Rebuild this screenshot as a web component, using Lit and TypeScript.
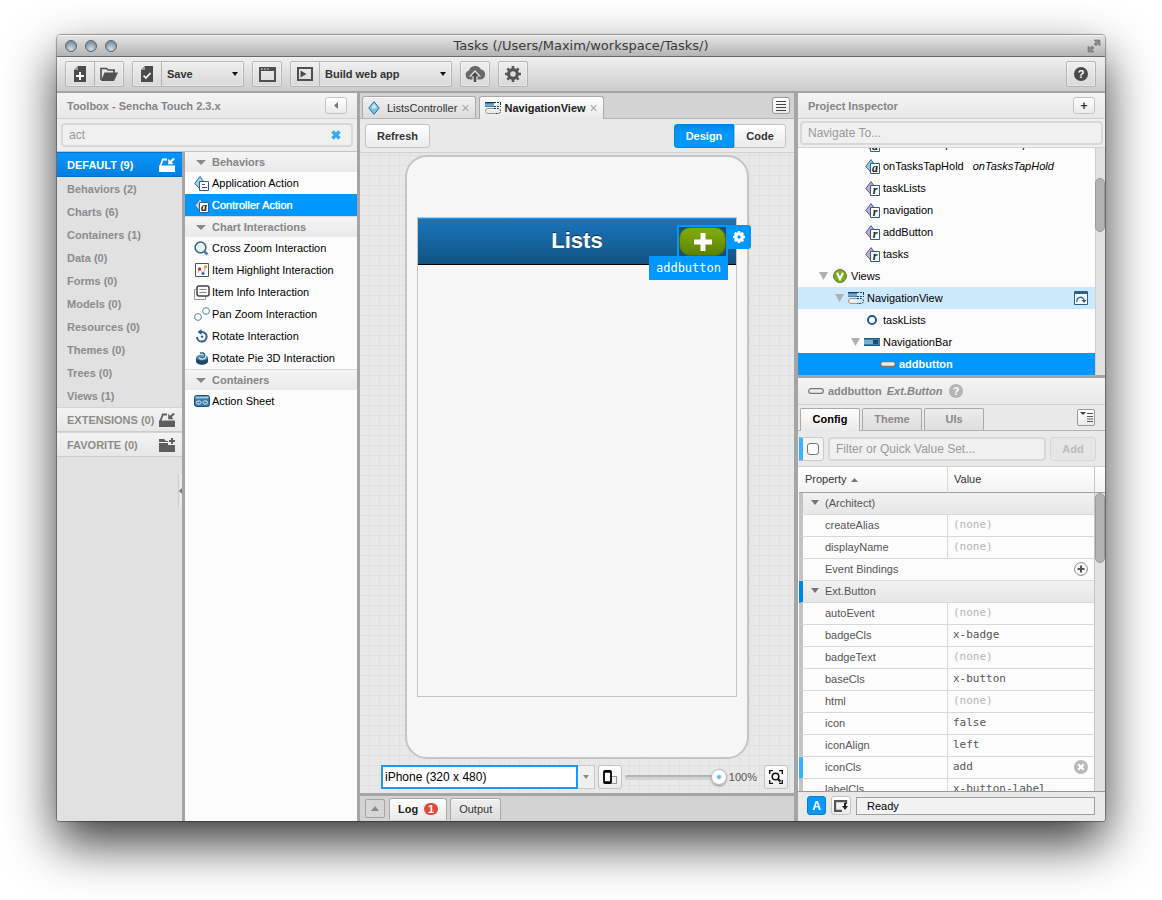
import { LitElement, html, css, svg, nothing, TemplateResult } from "lit";
import { customElement, state } from "lit/decorators.js";
import { classMap } from "lit/directives/class-map.js";

const icon = (w: number, h: number, body: TemplateResult) =>
  html`<svg width=${w} height=${h} viewBox="0 0 ${w} ${h}" aria-hidden="true">${body}</svg>`;

const caret = icon(6, 4, svg`<path d="M0 0h6L3 4z" fill="#111"/>`);
const triangle = (fill: string, w = 10, h = 6) =>
  html`<svg width=${w} height=${h} viewBox="0 0 10 6" preserveAspectRatio="none" aria-hidden="true"><path d="M0 0h10L5 6z" fill=${fill} /></svg>`;

const sheetPath = "M4 0h8v16H0V4z";

const I = {
  newFile: icon(12, 16, svg`<path d=${sheetPath} fill="#4b4b4b"/><path d="M0 4h4V0" fill="#9a9a9a"/><path d="M5 6h2v3h3v2H7v3H5v-3H2V9h3z" fill="#f4f4f4"/>`),
  check: icon(12, 16, svg`<path d=${sheetPath} fill="#4b4b4b"/><path d="M0 4h4V0" fill="#9a9a9a"/><path d="M2.6 9.6l2.3 2.4 4.6-5" stroke="#f4f4f4" stroke-width="1.8" fill="none"/>`),
  folder: icon(18, 14, svg`<path d="M1 13V1.5h5.5L8 3h6v3" fill="none" stroke="#4b4b4b" stroke-width="1.6"/><path d="M4.5 5.500H18l-4 8.500H1z" fill="#505050"/>`),
  win: icon(17, 15, svg`<path d="M1 1h15v13H1z" fill="none" stroke="#4f4f4f" stroke-width="2"/><path d="M1 2.500h15" stroke="#4f4f4f" stroke-width="3"/><path d="M2 2h1.500M5 2h1.500M8 2h1.500" stroke="#eee" stroke-width="1.200"/>`),
  run: icon(16, 14, svg`<path d="M1 1h14v12H1z" fill="none" stroke="#4f4f4f" stroke-width="2"/><path d="M3.500 3.500L9.500 7l-6 3.500z" fill="#4f4f4f"/>`),
  cloud: icon(22, 18, svg`<path d="M6 14.500a4.600 4.600 0 0 1-1-9A6.500 6.500 0 0 1 17 4.600a5 5 0 0 1-.5 9.900z" fill="#686868"/><path d="M11 5l6 6.400h-3.500V18h-5v-6.600H5z" fill="#e6e6e6"/><path d="M11 7l4 4.300h-2.700V17H9.700v-5.700H7z" fill="#4c4c4c"/>`),
  gear: icon(16, 16, svg`<g fill="#555"><circle cx="8" cy="8" r="6"/><path d="M6.700 0h2.600v16H6.700z"/><path d="M0 6.700h16v2.600H0z"/><path d="M6.700 0h2.600v16H6.700z" transform="rotate(45 8 8)"/><path d="M0 6.700h16v2.600H0z" transform="rotate(45 8 8)"/></g><circle cx="8" cy="8" r="2.800" fill="#dedede"/>`),
  smallGear: icon(12, 12, svg`<g fill="#fff"><circle cx="6" cy="6" r="4.800"/><path d="M4.700 0h2.600v12H4.700zM0 4.700h12v2.600H0z"/><path d="M4.700 0h2.600v12H4.700zM0 4.700h12v2.600H0z" transform="rotate(45 6 6)"/></g><circle cx="6" cy="6" r="1.700" fill="#0097ff"/>`),
  help: icon(14, 14, svg`<circle cx="7" cy="7" r="7" fill="#4b4b4b"/><text x="7" y="11" text-anchor="middle" font-family="Liberation Sans" font-weight="700" font-size="11" fill="#fff">?</text>`),
  helpGrey: icon(14, 14, svg`<circle cx="7" cy="7" r="7" fill="#b4b4b4"/><text x="7" y="11" text-anchor="middle" font-family="Liberation Sans" font-weight="700" font-size="11" fill="#fff">?</text>`),
  expand: icon(14, 14, svg`<g fill="#8c8c8c" stroke="#6d6d6d" stroke-width=".6"><path d="M7 1h6v6l-2-2-2 2-2-2 2-2z"/><path d="M7 13H1V7l2 2 2-2 2 2-2 2z"/></g>`),
  left: icon(4, 7, svg`<path d="M4 0v7L0 3.500z" fill="#777"/>`),
  clear: icon(10, 10, svg`<path d="M1.500 1.500l7 7M8.500 1.500l-7 7" stroke="#35aaf2" stroke-width="3.400"/>`),
  tray: (c: string) => icon(16, 14, svg`<path d="M0 7.500h16V14H0z" fill=${c}/><path d="M1.200 8.500L3.800 1.500H8" stroke=${c} stroke-width="1.800" fill="none"/><path d="M16 1l-3.300 3.300 2 2H9.200V.8l2 2L14 0z" fill=${c}/>`),
  favorite: icon(16, 14, svg`<path d="M0 1h5l2 2h2v1H0z" fill="#5e5e5e"/><path d="M0 5h9v2h7v7H0z" fill="#5e5e5e"/><path d="M12 0h2v6h-2zM10 2h6v2h-6z" fill="#5e5e5e"/>`),
  diamond: icon(12, 14, svg`<path d="M6 .6L11.200 7 6 13.400.8 7z" fill="#7fbfe6" stroke="#2f6f9c"/><path d="M6 2.500L9 6.500 6 8 3 6.500z" fill="#c4e4f7"/>`),
  appAction: icon(15, 15, svg`<path d="M6 .6L11 7.500 6 13 .8 7.500z" fill="#a9d2ec" stroke="#2f6f9c"/><path d="M5.500 5.500h9v9h-9z" fill="#fff" stroke="#2b628a"/><path d="M8 8.500h3M8 11.500h5" stroke="#456"/>`),
  letter: (ch: string, fill: string, line: string) => icon(15, 15, svg`<path d="M6 .6L11 7.500 6 13.400.8 7.500z" fill=${fill} stroke=${line}/><path d="M5.500 4.500h9v10h-9z" fill="#fff" stroke="#2b628a"/><text x="10" y="13" text-anchor="middle" font-family="Liberation Serif" font-style="italic" font-weight="700" font-size="12" fill="#222">${ch}</text>`),
  zoom: icon(15, 15, svg`<circle cx="6.500" cy="6.500" r="5.400" fill="#e6f1f8" stroke="#2f6284" stroke-width="1.500"/><path d="M10.500 10.500l3 3" stroke="#4f83a4" stroke-width="2.600"/>`),
  highlight: icon(14, 14, svg`<path d="M.5.5h13v13H.5z" fill="#fff" stroke="#555"/><path d="M3 10l1.500-4L8.500 10.500l2-7" stroke="#99a" fill="none" stroke-width=".8"/><circle cx="4.500" cy="6" r="1.700" fill="#c33"/><circle cx="8" cy="10.500" r="1.600" fill="#2f6fb5"/><circle cx="10.500" cy="3.800" r="1.600" fill="#e0a02a"/>`),
  info: icon(16, 15, svg`<path d="M.5 4.500h11v10H.5z" fill="#fff" stroke="#999"/><rect x="3" y="1" width="12" height="10" rx="2" fill="#fafafa" stroke="#444" stroke-width="1.500"/><path d="M5.500 4.500h7M5.500 7.500h7" stroke="#888"/>`),
  pan: icon(16, 14, svg`<circle cx="4" cy="10" r="3.400" fill="#fff" stroke="#5686a6"/><circle cx="12" cy="4" r="3.400" fill="#fff" stroke="#5686a6"/>`),
  rotate: icon(14, 14, svg`<path d="M6 3h1a4.800 4.800 0 1 1-5 5" fill="none" stroke="#2f6284" stroke-width="2"/><path d="M6.500 0L2.500 3l4 3z" fill="#2f6284"/><circle cx="7" cy="7.800" r="1.200" fill="#2f6284"/>`),
  pie: icon(14, 14, svg`<path d="M1 6v4c0 5 12 5 12 0V6z" fill="#1e4766"/><ellipse cx="7" cy="6.500" rx="6" ry="3" fill="#5d8dac"/><path d="M4 2h4a2.700 2.700 0 1 1-3 4" stroke="#fff" stroke-width="2.600" fill="none"/><path d="M5 2h3a2.500 2.500 0 1 1-3 3.500" stroke="#2f6284" stroke-width="1.500" fill="none"/>`),
  sheet: icon(16, 12, svg`<rect x=".5" y=".5" width="15" height="11" rx="2" fill="#3b7ba8" stroke="#1d4f74"/><path d="M1.500 2.500h13" stroke="#9cc6e0" stroke-width="2"/><rect x="2.500" y="6" width="4.500" height="3" rx="1.500" fill="#3b7ba8" stroke="#e6f2fa"/><rect x="9" y="6" width="4.500" height="3" rx="1.500" fill="#3b7ba8" stroke="#e6f2fa"/>`),
  nav: icon(16, 12, svg`<path d="M0 0h9v5H0z" fill="#4a86b0"/><path d="M0 .5h9" stroke="#123f5e"/><path d="M0 3h9" stroke="#9cc6e0"/><path d="M9 .5h7M9 4.500h7M15.500 1v4" stroke="#123f5e" stroke-dasharray="2 1" fill="none"/><path d="M9 6.500H3a2.400 2.400 0 0 0 0 5h6" fill="#eee" stroke="#999"/><path d="M9 6.500h4a2.400 2.400 0 0 1 0 5H9" fill="none" stroke="#123f5e" stroke-dasharray="2 1"/>`),
  bar: icon(16, 8, svg`<path d="M0 0h16v8H0z" fill="#3f7fa8"/><path d="M0 2h9v4H0z" fill="#7fb0d0"/><path d="M0 .5h16M0 7.500h16" stroke="#1d5a85"/><rect x="9" y="2" width="5" height="4" fill="#164b70"/>`),
  pill: icon(16, 6, svg`<rect x=".7" y=".7" width="14.600" height="4.600" rx="2.300" fill="#ececec" stroke="#777" stroke-width="1.200"/>`),
  views: icon(14, 14, svg`<circle cx="7" cy="7" r="6.400" fill="#7cab1c" stroke="#4c7410"/><path d="M4 3.800l3 6.200 3-6.200" stroke="#fff" stroke-width="2.200" fill="none"/>`),
  ring: icon(10, 10, svg`<circle cx="5" cy="5" r="4" fill="#fff" stroke="#2a56a4" stroke-width="2"/>`),
  preview: icon(14, 14, svg`<path d="M.5.5h13v13H.5z" fill="#fff" stroke="#2b628a"/><path d="M1 2h12" stroke="#2b628a" stroke-width="2"/><path d="M3 11a3.600 3.600 0 1 1 7-1.500" stroke="#2b628a" stroke-width="1.300" fill="none"/><path d="M7.500 9h5L10 12z" fill="#2b628a"/>`),
  list: icon(10, 10, svg`<path d="M0 .5h10M0 3.500h10M0 6.500h10M0 9.500h10" stroke="#444"/>`),
  sort: icon(13, 11, svg`<path d="M0 0h6L3 3z" fill="#444"/><path d="M7 1.500h6M7 4.500h6M7 7h6M7 9.500h6" stroke="#555" stroke-width="1.200"/>`),
  plus: icon(18, 18, svg`<path d="M6.500 0h5v6.500H18v5h-6.500V18h-5v-6.500H0v-5h6.500z" fill="#fff"/>`),
  orient: icon(14, 14, svg`<rect x="7" y="6.500" width="6.500" height="7" fill="#eee" stroke="#999"/><rect x="1" y="1" width="7" height="12" rx="1" fill="#fff" stroke="#000" stroke-width="1.800"/><path d="M1 2h7M1 12h7" stroke="#000" stroke-width="1.500"/>`),
  fit: icon(14, 14, svg`<path d="M.7 4V.7H4M10 .7h3.300V4M13.300 10v3.300H10M4 13.300H.7V10" fill="none" stroke="#111" stroke-width="1.300"/><circle cx="6.500" cy="6.500" r="3.300" fill="none" stroke="#111" stroke-width="1.500"/><path d="M8.500 8.500l3 3" stroke="#111" stroke-width="2"/>`),
  up: icon(8, 5, svg`<path d="M0 5h8L4 0z" fill="#888"/>`),
  sortUp: icon(7, 4, svg`<path d="M0 4h7L3.500 0z" fill="#777"/>`),
  addRound: icon(14, 14, svg`<circle cx="7" cy="7" r="6.400" fill="#fff" stroke="#888"/><path d="M7 3.500v7M3.500 7h7" stroke="#555" stroke-width="2"/>`),
  removeRound: icon(14, 14, svg`<circle cx="7" cy="7" r="7" fill="#b8b8b8"/><path d="M4.200 4.200l5.600 5.600M9.800 4.200L4.200 9.800" stroke="#fff" stroke-width="2.200"/>`),
  dock: icon(14, 12, svg`<path d="M12 4V1H1v10h7" fill="none" stroke="#555" stroke-width="2.400"/><path d="M8 6h6l-3 4z" fill="#222"/><path d="M11 3v4" stroke="#222" stroke-width="2"/>`),
};

const CATEGORIES = [
  "Behaviors (2)", "Charts (6)", "Containers (1)", "Data (0)", "Forms (0)",
  "Models (0)", "Resources (0)", "Themes (0)", "Trees (0)", "Views (1)",
];

const COMPONENTS = [
  { group: "Behaviors", items: [["Application Action", I.appAction], ["Controller Action", I.letter("a", "#a9d2ec", "#2f6f9c")]] },
  {
    group: "Chart Interactions",
    items: [
      ["Cross Zoom Interaction", I.zoom], ["Item Highlight Interaction", I.highlight], ["Item Info Interaction", I.info],
      ["Pan Zoom Interaction", I.pan], ["Rotate Interaction", I.rotate], ["Rotate Pie 3D Interaction", I.pie],
    ],
  },
  { group: "Containers", items: [["Action Sheet", I.sheet]] },
] as { group: string; items: [string, TemplateResult][] }[];

const action = I.letter("a", "#8fcbe8", "#2f6f9c");
const reference = I.letter("r", "#b3b0dc", "#5c5796");
interface TreeNode { level: number; label: string; icon: TemplateResult; note?: string; open?: boolean; mark?: string }
const TREE: TreeNode[] = [
  { level: 3, label: "onListItemTap", icon: action, note: "onListItemTap" },
  { level: 3, label: "onTasksTapHold", icon: action, note: "onTasksTapHold" },
  { level: 3, label: "taskLists", icon: reference },
  { level: 3, label: "navigation", icon: reference },
  { level: 3, label: "addButton", icon: reference },
  { level: 3, label: "tasks", icon: reference },
  { level: 1, label: "Views", icon: I.views, open: true },
  { level: 2, label: "NavigationView", icon: I.nav, open: true, mark: "current" },
  { level: 3, label: "taskLists", icon: I.ring },
  { level: 3, label: "NavigationBar", icon: I.bar, open: true },
  { level: 4, label: "addbutton", icon: I.pill, mark: "selected" },
];

interface Prop { name: string; value?: string; head?: boolean; events?: boolean; set?: boolean }
const PROPS: Prop[] = [
  { name: "(Architect)", head: true },
  { name: "createAlias" }, { name: "displayName" },
  { name: "Event Bindings", events: true },
  { name: "Ext.Button", head: true, set: true },
  { name: "autoEvent" }, { name: "badgeCls", value: "x-badge" }, { name: "badgeText" },
  { name: "baseCls", value: "x-button" }, { name: "html" }, { name: "icon", value: "false" },
  { name: "iconAlign", value: "left" }, { name: "iconCls", value: "add", set: true },
  { name: "labelCls", value: "x-button-label" },
];

const base = css`
  *, *::before, *::after { box-sizing: border-box; }
  button, input, select { font: inherit; color: inherit; margin: 0; }
  button { padding: 0; border: 0; background: none; cursor: pointer; display: flex; align-items: center; }
  svg { display: block; flex: none; }
  h1, h2, h3 { margin: 0; font-size: 11px; }
  .field { border: 2px solid #d8d8d8; border-radius: 4px; background: #f0f0f0; font-size: 12px; color: #999; height: 24px; padding: 0 6px; min-width: 0; outline: 0; }
  .field::placeholder { color: #999; opacity: 1; }
  .btn { justify-content: center; border: 1px solid #c3c3c3; border-radius: 3px; background: linear-gradient(#fff, #ebebeb); font-weight: 700; color: #333; }
  .head { display: flex; align-items: center; height: 26px; padding: 0 10px; border-bottom: 1px solid #cfcfcf; background: linear-gradient(#f4f4f4, #e8e8e8); color: #858585; }
`;

@customElement("toolbox-panel")
class ToolboxPanel extends LitElement {
  @state() private selected = "Controller Action";

  static styles = [base, css`
    :host { display: flex; flex-direction: column; min-height: 0; background: #ededed; }
    .head h2 { flex: 1; }
    .collapse { width: 22px; height: 17px; }
    .search { display: flex; align-items: center; height: 32px; padding: 0 4px; position: relative; }
    .search .field { flex: 1; padding-right: 30px; }
    .clear { position: absolute; right: 16px; }
    .cols { flex: 1; display: flex; min-height: 0; border-top: 1px solid #c4c4c4; }
    .cats { width: 128px; flex: none; background: #e1e1e1; border-right: 3px solid #a5a5a5; position: relative; font-weight: 700; color: #8c8c8c; overflow: hidden; }
    .cat { width: 100%; height: 23px; padding: 0 10px; }
    .section { width: 100%; height: 25px; padding: 0 7px 0 10px; justify-content: space-between; background: linear-gradient(#f3f3f3, #e7e7e7); border-bottom: 1px solid #cbcbcb; border-top: 1px solid #d4d4d4; }
    .section.active { background: linear-gradient(#0a95fb, #0080e0); color: #fff; border-color: #0073c8; }
    .handle { position: absolute; right: 0; top: 50%; width: 4px; height: 34px; margin-top: -13px; border-left: 1px solid #ccc; background: #e8e8e8; }
    .items { flex: 1; min-width: 0; background: #fcfcfc; overflow: hidden; }
    .group { height: 21px; display: flex; align-items: center; gap: 6px; padding: 0 11px; background: linear-gradient(#f5f5f5, #e9e9e9); border-top: 1px solid #dadada; color: #858585; }
    .group:first-child { height: 20px; border-top: 0; }
    .item { width: 100%; height: 22px; padding: 0 8px; gap: 2px; color: #000; }
    .ico { width: 17px; display: flex; justify-content: center; }
    .item.on { background: #0097ff; color: #fff; text-shadow: 0 0 1px #fff; }
  `];

  render() {
    return html`
      <header class="head">
        <h2>Toolbox - Sencha Touch 2.3.x</h2>
        <button class="btn collapse" aria-label="Collapse toolbox">${I.left}</button>
      </header>
      <div class="search">
        <input class="field" type="text" value="act" aria-label="Search toolbox" />
        <button class="clear" aria-label="Clear search">${I.clear}</button>
      </div>
      <div class="cols">
        <nav class="cats" aria-label="Categories">
          <button class="section active">DEFAULT (9) ${I.tray("#fff")}</button>
          ${CATEGORIES.map((c) => html`<button class="cat">${c}</button>`)}
          <button class="section">EXTENSIONS (0) ${I.tray("#5e5e5e")}</button>
          <button class="section">FAVORITE (0) ${I.favorite}</button>
          <button class="handle" aria-label="Collapse categories">${icon(3, 6, svg`<path d="M3 0v6L0 3z" fill="#777"/>`)}</button>
        </nav>
        <div class="items">
          ${COMPONENTS.map((g) => html`
            <h3 class="group">${triangle("#888", 10, 5)} ${g.group}</h3>
            ${g.items.map(([label, ic]) => html`
              <button class=${classMap({ item: true, on: label === this.selected })} @click=${() => (this.selected = label)}>
                <span class="ico">${ic}</span>${label}
              </button>`)}`)}
        </div>
      </div>`;
  }
}

@customElement("design-view")
class DesignView extends LitElement {
  static styles = [base, css`
    :host { display: flex; flex-direction: column; min-width: 0; min-height: 0; }
    .tabs { display: flex; align-items: flex-end; gap: 3px; height: 26px; padding: 0 4px 0 2px; background: #d3d3d3; border-bottom: 1px solid #b5b5b5; }
    .tab { height: 22px; border: 1px solid #a9a9a9; border-bottom: 0; border-radius: 3px 3px 0 0; background: linear-gradient(#f0f0f0, #dcdcdc); color: #333; padding: 0 5px; box-shadow: inset 0 1px #fff; }
    .tab.on { height: 23px; margin-bottom: -1px; background: linear-gradient(#fff, #e9e9e9); font-weight: 700; color: #222; }
    .label { margin: 0 4px; }
    .label.wide { margin-left: 7px; }
    .x { color: #aaa; font-size: 14px; font-weight: 400; line-height: 16px; }
    .menu { margin-left: auto; align-self: center; width: 18px; height: 17px; border-color: #999; }
    .bar { display: flex; align-items: center; justify-content: space-between; height: 34px; padding: 0 8px 0 5px; background: #e9e9e9; border-bottom: 1px solid #d0d0d0; }
    .refresh { width: 65px; height: 24px; }
    .switch { display: flex; }
    .switch .btn { height: 24px; width: 52px; border-radius: 0 3px 3px 0; }
    .switch .design { width: 60px; border-radius: 3px 0 0 3px; background: linear-gradient(#0085e0, #0097ff 30%); color: #fff; border-color: #0084dd; }
    .canvas { flex: 1; min-height: 0; display: flex; flex-direction: column; align-items: center; justify-content: space-between; padding: 2px 6px 4px; overflow: hidden;
      background: linear-gradient(#e0e0e0 1px, transparent 1px) 0 2px / 10px 10px, linear-gradient(90deg, #e0e0e0 1px, transparent 1px) 9px 0 / 10px 10px #e8e8e8; }
    .phone { padding: 60px 10px; border: 2px solid #c5c5c5; border-radius: 22px; background: #f6f6f6; }
    .screen { width: 320px; height: 480px; border: 1px solid #c5c5c5; background: #f6f6f6; }
    .navbar { position: relative; display: flex; align-items: center; justify-content: center; height: 47px; border-bottom: 1px solid #000; background: linear-gradient(#1a76bd, #105482); box-shadow: inset 0 1px #2a8ede; }
    .title { color: #fff; font-size: 22px; font-weight: 700; text-shadow: 0 -1px rgba(0, 0, 0, .5); }
    .picked { position: absolute; right: 8px; top: 7px; width: 51px; height: 33px; border: 2px solid #0097ff; background: #13507f; }
    .add { width: 100%; height: 100%; justify-content: center; border-radius: 11px; background: linear-gradient(#82ac0a, #5c8300); border: 1px solid #4c6c0c; }
    .gear { position: absolute; left: 48px; top: -2px; width: 24px; height: 24px; justify-content: center; background: #0097ff; border-radius: 0 3px 3px 0; }
    .tip { position: absolute; right: -2px; top: 29px; height: 24px; padding: 0 7px; background: #0097ff; color: #fff; font: 12px/24px "DejaVu Sans Mono", monospace; }
    .controls { width: 100%; display: flex; align-items: center; padding: 0 0 0 15px; height: 24px; gap: 3px; }
    .device { position: relative; display: flex; flex: 1; height: 24px; }
    .device select { appearance: none; flex: 1; min-width: 0; border: 2px solid #1a97ee; background: #fff; color: #000; font-size: 12px; padding: 0 2px; border-radius: 0; outline: 0; }
    .drop { width: 17px; display: flex; align-items: center; justify-content: center; border: 1px solid #c9c9c9; border-left: 0; background: #f0f0f0; pointer-events: none; }
    .sq { width: 24px; height: 24px; flex: none; }
    .zoom { display: flex; align-items: center; color: #555; }
    .zoom label { margin: 0 4px 0 2px; }
    .range { appearance: none; width: 102px; height: 20px; background: none; }
    .range::-webkit-slider-runnable-track { height: 5px; border-radius: 3px; background: #d4d4d4; border-top: 2px solid #b4b4b4; }
    .range::-webkit-slider-thumb { appearance: none; width: 16px; height: 16px; margin-top: -8px; border-radius: 50%; border: 1px solid #bbb; background: radial-gradient(circle, #5eb4ea 0 1px, #fff 3px); box-shadow: 0 1px 2px rgba(0, 0, 0, .4); }
    .log { display: flex; align-items: flex-end; gap: 3px; height: 28px; padding: 0 5px 1px; background: #d3d3d3; border-top: 3px solid #a5a5a5; }
    .log .btn { background: #d6d6d6; border-color: #a5a5a5; border-radius: 2px; width: 20px; height: 19px; margin: 0 1px 2px 0; }
    .log .tab, .log .tab.on { height: 22px; margin: 0; padding: 0 8px 2px; gap: 6px; }
    .count { min-width: 14px; height: 12px; border-radius: 6px; background: #e04b3c; color: #fff; line-height: 12px; text-align: center; }
  `];

  render() {
    return html`
      <div class="tabs" role="tablist">
        <button class="tab" role="tab">${I.diamond}<span class="label wide">ListsController</span><span class="x">×</span></button>
        <button class="tab on" role="tab" aria-selected="true">${I.nav}<span class="label">NavigationView</span><span class="x">×</span></button>
        <button class="btn menu" aria-label="List open tabs">${I.list}</button>
      </div>
      <div class="bar">
        <button class="btn refresh">Refresh</button>
        <div class="switch"><button class="btn design">Design</button><button class="btn">Code</button></div>
      </div>
      <div class="canvas">
        <div class="phone">
          <div class="screen">
            <div class="navbar">
              <span class="title">Lists</span>
              <div class="picked">
                <button class="add" aria-label="Add">${I.plus}</button>
                <button class="gear" aria-label="Configure">${I.smallGear}</button>
                <span class="tip">addbutton</span>
              </div>
            </div>
          </div>
        </div>
        <div class="controls">
          <div class="device">
            <select aria-label="Device"><option>iPhone (320 x 480)</option></select>
            <span class="drop">${triangle("#888", 6, 4)}</span>
          </div>
          <button class="btn sq" aria-label="Change orientation">${I.orient}</button>
          <div class="zoom">
            <input class="range" id="zoom" type="range" min="0" max="100" value="100" />
            <label for="zoom">100%</label>
          </div>
          <button class="btn sq" aria-label="Fit to window">${I.fit}</button>
        </div>
      </div>
      <footer class="log">
        <button class="btn" aria-label="Expand log">${I.up}</button>
        <button class="tab on">Log <span class="count">1</span></button>
        <button class="tab">Output</button>
      </footer>`;
  }
}

@customElement("inspector-panel")
class InspectorPanel extends LitElement {
  static styles = [base, css`
    :host { display: flex; flex-direction: column; min-height: 0; background: #e9e9e9; }
    .head h2 { flex: 1; }
    .plus { width: 22px; height: 17px; font-size: 12px; }
    .search { display: flex; align-items: center; height: 29px; padding: 0 2px; border-bottom: 1px solid #d4d4d4; background: #efefef; }
    .search .field { flex: 1; }
    .tree { display: flex; height: 227px; flex: none; background: #fcfcfc; overflow: hidden; }
    .nodes { flex: 1; min-width: 0; display: flex; flex-direction: column; justify-content: flex-end; }
    .node { flex: none; height: 22px; width: 100%; padding-right: 7px; color: #000; gap: 3px; }
    .l1 { padding-left: 21px; } .l2 { padding-left: 37px; } .l3 { padding-left: 53px; } .l4 { padding-left: 69px; }
    .arrow { width: 10px; flex: none; }
    .ico { width: 16px; flex: none; display: flex; justify-content: center; }
    .note { font-style: italic; margin-left: 6px; flex: 1; text-align: left; }
    .end { margin-left: auto; }
    .current { background: #cce8fb; }
    .selected { background: #0097ff; color: #fff; font-weight: 700; }
    .track { width: 10px; flex: none; background: #e2e2e2; box-shadow: inset 1px 0 #d0d0d0; }
    .thumb { height: 54px; margin-top: 30px; border: 1px solid #999; border-radius: 5px; background: #b3b3b3; }
    .detail { border-top: 3px solid #a5a5a5; height: 30px; gap: 4px; font-weight: 700; }
    .detail em { margin: 0 3px 0 1px; }
    .tabs { display: flex; align-items: flex-end; gap: 2px; height: 26px; padding: 0 10px 0 2px; border-bottom: 1px solid #b5b5b5; background: #e9e9e9; }
    .tab { width: 60px; height: 22px; padding-bottom: 2px; justify-content: center; border: 1px solid #a9a9a9; border-bottom: 0; border-radius: 2px 2px 0 0; background: linear-gradient(#ececec, #dedede); font-weight: 700; color: #8a8a8a; }
    .tab.on { height: 23px; margin-bottom: -1px; background: linear-gradient(#fff, #e9e9e9); color: #000; }
    .menu { margin: 0 0 4px auto; width: 18px; height: 17px; border-color: #999; border-radius: 2px; }
    .filter { display: flex; align-items: center; gap: 4px; height: 36px; padding: 0 9px 0 1px; border-bottom: 1px solid #d0d0d0; }
    .filter .field { flex: 1; }
    .check { display: flex; align-items: center; justify-content: center; width: 25px; height: 24px; border: 1px solid #c9c9c9; border-left: 4px solid #3fb0ff; border-radius: 0 3px 3px 0; background: #f3f3f3; }
    .check input { appearance: none; width: 12px; height: 12px; border: 1px solid #777; border-radius: 3px; background: #fff; }
    .addbtn { width: 46px; height: 24px; color: #bbb; background: #e6e6e6; border-color: #d6d6d6; }
    .grid { flex: 1; min-height: 0; display: flex; overflow: hidden; padding-left: 1px; background: #fcfcfc; }
    table { flex: 1; min-width: 0; align-self: flex-start; table-layout: fixed; border-collapse: separate; border-spacing: 0; color: #555; }
    .c1 { width: 148px; }
    th, td { padding: 0 6px 2px; text-align: left; font-weight: 400; height: 22px; border-bottom: 1px solid #d8d8d8; overflow: hidden; }
    thead th { height: 26px; border-bottom: 1px solid #a0a0a0; background: linear-gradient(#fff, #f3f3f3); color: #333; }
    thead th + th { border-left: 1px solid #d8d8d8; }
    .asc { display: inline-block; margin-left: 1px; vertical-align: 1px; }
    .name { border-left: 4px solid #c2c2c2; padding-left: 22px; }
    .val { border-left: 1px solid #d8d8d8; font: 11px "DejaVu Sans Mono", monospace; padding-left: 5px; }
    .group .name { padding-left: 8px; background: linear-gradient(#f1f1f1, #e7e7e7); }
    .set .name { border-left-color: #3fb0ff; }
    .group.set .name { border-left-color: #0087e6; }
    .line { display: flex; align-items: center; gap: 6px; }
    .none { color: #b5b5b5; }
    .line .end { margin-left: auto; }
    .side { width: 11px; flex: none; background: #e2e2e2; border-left: 1px solid #c4c4c4; }
    .cap { height: 26px; background: linear-gradient(#fff, #f3f3f3); border-bottom: 1px solid #a0a0a0; }
    .side .thumb { margin: 0; height: 70px; width: 10px; }
    .status { display: flex; align-items: center; gap: 5px; height: 30px; padding: 0 10px 2px 9px; border-top: 1px solid #999; background: #e9e9e9; }
    .a { width: 19px; height: 19px; justify-content: center; border: 1px solid #0080dc; border-radius: 3px; background: #0a97fb; color: #fff; font-size: 12px; font-weight: 700; }
    .dock { width: 20px; height: 19px; }
    .ready { flex: 1; height: 18px; line-height: 16px; border: 1px solid #a0a0a0; background: #f2f2f2; color: #000; padding: 0 10px; }
  `];

  private node(n: TreeNode) {
    return html`<button class="node l${n.level} ${n.mark ?? ""}">
      <span class="arrow">${n.open ? triangle("#b0b0b0", 9, 8) : nothing}</span>
      <span class="ico">${n.icon}</span><span>${n.label}</span>
      ${n.note ? html`<span class="note">${n.note}</span>` : nothing}
      ${n.mark === "current" ? html`<span class="end">${I.preview}</span>` : nothing}
    </button>`;
  }

  private row(p: Prop) {
    if (p.head || p.events) {
      return html`<tr class=${classMap({ group: !!p.head, set: !!p.set })}>
        <th class="name" colspan="2" scope="rowgroup"><div class="line">
          ${p.head ? triangle("#777", 8, 5) : nothing} ${p.name}
          ${p.events ? html`<button class="end" aria-label="Add event binding">${I.addRound}</button>` : nothing}
        </div></th></tr>`;
    }
    return html`<tr class=${classMap({ set: !!p.set })}>
      <th class="name" scope="row">${p.name}</th>
      <td class="val"><div class="line">
        ${p.value ?? html`<span class="none">(none)</span>`}
        ${p.set ? html`<button class="end" aria-label="Reset iconCls">${I.removeRound}</button>` : nothing}
      </div></td></tr>`;
  }

  render() {
    return html`
      <header class="head"><h2>Project Inspector</h2><button class="btn plus" aria-label="Add to project">+</button></header>
      <div class="search"><input class="field" type="text" placeholder="Navigate To..." aria-label="Navigate to" /></div>
      <div class="tree">
        <div class="nodes">${TREE.map((n) => this.node(n))}</div>
        <div class="track"><div class="thumb"></div></div>
      </div>
      <div class="head detail">${I.pill}<span>addbutton</span><em>Ext.Button</em>${I.helpGrey}</div>
      <div class="tabs" role="tablist">
        <button class="tab on" role="tab" aria-selected="true">Config</button>
        <button class="tab" role="tab">Theme</button>
        <button class="tab" role="tab">UIs</button>
        <button class="btn menu" aria-label="Display options">${I.sort}</button>
      </div>
      <div class="filter">
        <label class="check"><input type="checkbox" aria-label="Show set values only" /></label>
        <input class="field" type="text" placeholder="Filter or Quick Value Set..." aria-label="Filter or quick value set" />
        <button class="btn addbtn" disabled>Add</button>
      </div>
      <div class="grid">
        <table>
          <colgroup><col class="c1" /><col /></colgroup>
          <thead><tr><th scope="col">Property <span class="asc">${I.sortUp}</span></th><th scope="col">Value</th></tr></thead>
          <tbody>${PROPS.map((p) => this.row(p))}</tbody>
        </table>
        <div class="side"><div class="cap"></div><div class="thumb"></div></div>
      </div>
      <footer class="status">
        <button class="a" aria-label="Autosave">A</button>
        <button class="btn dock" aria-label="Dock panel">${I.dock}</button>
        <output class="ready">Ready</output>
      </footer>`;
  }
}

@customElement("app-root")
class AppRoot extends LitElement {
  static styles = [base, css`
    :host { display: flex; box-sizing: border-box; height: 100vh; padding: 35px 57px 79px; overflow: hidden; background: #fff; font: 11px "Liberation Sans", Arial, sans-serif; color: #333; }
    .window { flex: 1; min-width: 0; display: flex; flex-direction: column; border-radius: 4px 4px 3px 3px; overflow: hidden; background: #e9e9e9; box-shadow: 0 0 1px 1px rgba(0, 0, 0, .35), 0 22px 50px rgba(0, 0, 0, .78); }
    .titlebar { display: flex; align-items: center; height: 22px; padding: 0 4px 0 8px; background: linear-gradient(#e6e6e6, #b4b4b4); border-bottom: 1px solid #6a6a6a; box-shadow: inset 0 1px #f4f4f4; }
    .lights { display: flex; gap: 8px; width: 80px; }
    .light { width: 12px; height: 12px; border-radius: 50%; border: 1px solid #5c646c; background: radial-gradient(circle at 50% 80%, #d4dfe8, #8593a0 70%); }
    .titlebar h1 { flex: 1; text-align: center; font: 13px "DejaVu Sans", sans-serif; color: #3a3a3a; }
    .tools { width: 84px; display: flex; justify-content: flex-end; }
    .toolbar { display: flex; gap: 8px; height: 36px; padding: 4px 9px 4px 8px; background: linear-gradient(#f0f0f0, #cdcdcd); border-bottom: 2px solid #a3a3a3; }
    .set { display: flex; height: 26px; border: 1px solid #b5b5b5; border-radius: 2px; background: linear-gradient(#efefef, #d9d9d9); box-shadow: inset 0 0 0 1px rgba(255, 255, 255, .35); }
    .set > button { justify-content: center; width: 28px; font-weight: 700; color: #333; }
    .set > button + button { width: 29px; border-left: 1px solid #b5b5b5; }
    .set > .save, .set > .build { justify-content: space-between; padding: 0 5px; }
    .set > button.save { width: 82px; }
    .set > button.build { width: 132px; }
    .spacer { flex: 1; }
    .body { flex: 1; min-height: 0; display: flex; background: #a5a5a5; }
    toolbox-panel { width: 300px; flex: none; margin-right: 3px; }
    design-view { flex: 1; margin-right: 4px; }
    inspector-panel { width: 307px; flex: none; }
  `];

  render() {
    return html`
      <main class="window">
        <header class="titlebar">
          <div class="lights"><button class="light" aria-label="Close"></button><button class="light" aria-label="Minimize"></button><button class="light" aria-label="Zoom"></button></div>
          <h1>Tasks (/Users/Maxim/workspace/Tasks/)</h1>
          <div class="tools"><button aria-label="Full screen">${I.expand}</button></div>
        </header>
        <div class="toolbar" role="toolbar">
          <div class="set"><button aria-label="New project">${I.newFile}</button><button aria-label="Open project">${I.folder}</button></div>
          <div class="set"><button aria-label="Save project">${I.check}</button><button class="save">Save ${caret}</button></div>
          <div class="set"><button aria-label="Preview">${I.win}</button></div>
          <div class="set"><button aria-label="Run build">${I.run}</button><button class="build">Build web app ${caret}</button></div>
          <div class="set"><button aria-label="Publish">${I.cloud}</button></div>
          <div class="set"><button aria-label="Settings">${I.gear}</button></div>
          <span class="spacer"></span>
          <div class="set"><button aria-label="Help">${I.help}</button></div>
        </div>
        <div class="body">
          <toolbox-panel></toolbox-panel>
          <design-view></design-view>
          <inspector-panel></inspector-panel>
        </div>
      </main>`;
  }
}
